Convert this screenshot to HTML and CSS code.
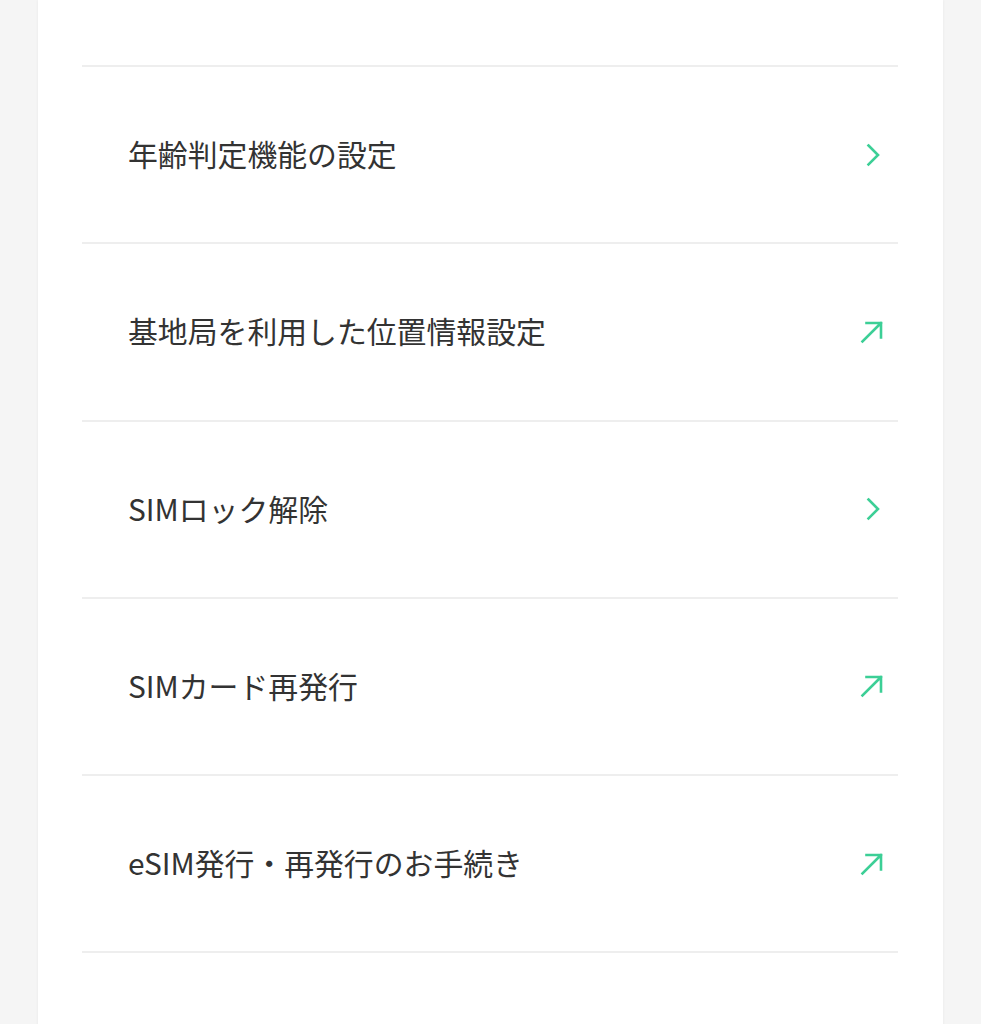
FILE: index.html
```html
<!DOCTYPE html>
<html lang="ja">
<head>
    <meta charset="UTF-8">
    <meta name="viewport" content="width=device-width, initial-scale=1.0">
    <title>設定</title>
    <link rel="stylesheet" href="styles.css">
</head>
<body>
    <div class="container">
        <ul class="menu-list">
            <!-- 内部リンク -->
            <li class="menu-row">
                <a href="#">
                    <span class="menu-label">年齢判定機能の設定</span>
                    <svg class="menu-icon" viewBox="0 0 28 28"><path d="M10.5 4.5 L20 14 L10.5 23.5"/></svg>
                </a>
            </li>
            <!-- 外部リンク -->
            <li class="menu-row">
                <a href="#">
                    <span class="menu-label">基地局を利用した位置情報設定</span>
                    <svg class="menu-icon" viewBox="0 0 28 28"><path d="M4.5 23.5 L23 5 M8.5 5 H23 V19.5"/></svg>
                </a>
            </li>
            <li class="menu-row">
                <a href="#">
                    <span class="menu-label">SIMロック解除</span>
                    <svg class="menu-icon" viewBox="0 0 28 28"><path d="M10.5 4.5 L20 14 L10.5 23.5"/></svg>
                </a>
            </li>
            <li class="menu-row">
                <a href="#">
                    <span class="menu-label">SIMカード再発行</span>
                    <svg class="menu-icon" viewBox="0 0 28 28"><path d="M4.5 23.5 L23 5 M8.5 5 H23 V19.5"/></svg>
                </a>
            </li>
            <li class="menu-row">
                <a href="#">
                    <span class="menu-label">eSIM発行・再発行のお手続き</span>
                    <svg class="menu-icon" viewBox="0 0 28 28"><path d="M4.5 23.5 L23 5 M8.5 5 H23 V19.5"/></svg>
                </a>
            </li>
            <li class="menu-row menu-row-end"></li>
        </ul>
    </div>
</body>
</html>
```

FILE: styles.css
```css
/* ページ全体 */
body {
    font-family: "Noto Sans CJK JP", "Noto Sans", sans-serif;
    background-color: #f5f5f5;
    margin: 0;
    padding: 0;
}

.container {
    width: 905px;
    margin-left: 38px;
    padding: 65px 45px 0 44px;
    box-sizing: border-box;
    background-color: #fff;
    box-shadow: 0 0 3px rgba(0, 0, 0, 0.06);
    min-height: 1100px;
}

.menu-list {
    list-style: none;
    margin: 0;
    padding: 0;
}

.menu-row {
    border-top: 2px solid #eeeeee;
}

.menu-row a {
    display: flex;
    align-items: center;
    justify-content: space-between;
    height: 175.25px;
    padding: 0 12px 0 46px;
    box-sizing: border-box;
    color: #333;
    text-decoration: none;
}

.menu-row-end {
    height: 60px;
}

.menu-label {
    font-size: 29.85px;
    line-height: 1.4;
    margin-bottom: 1px;
}

.menu-icon {
    width: 28px;
    height: 28px;
    fill: none;
    stroke: #3ccf96;
    stroke-width: 2.6;
    stroke-linecap: square;
}
```
